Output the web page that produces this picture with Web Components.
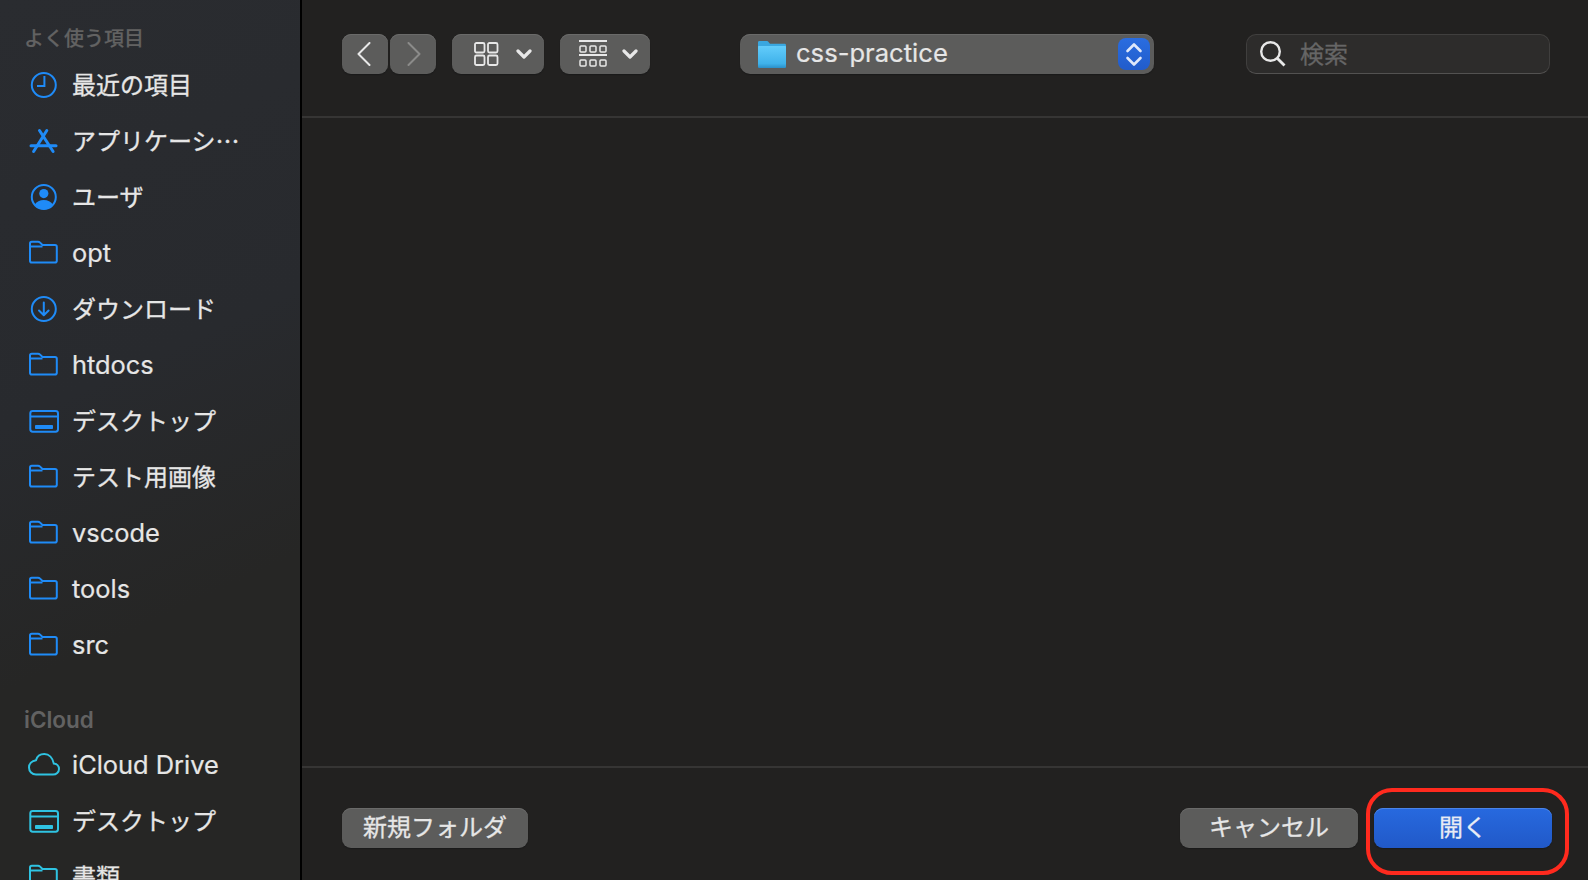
<!DOCTYPE html>
<html lang="ja">
<head>
<meta charset="utf-8">
<title>open dialog</title>
<style>
  html, body { margin: 0; height: 100%; overflow: hidden; background: #222120; }
  body { font-family: Inter, "Noto Sans CJK JP", sans-serif; color: #e6e6e6; }
</style>
</head>
<body>
<file-dialog>
  <side-header>よく使う項目</side-header>
  <side-item icon="clock" jp>最近の項目</side-item>
  <side-item icon="apps" jp>アプリケーシ…</side-item>
  <side-item icon="user" jp>ユーザ</side-item>
  <side-item icon="folder">opt</side-item>
  <side-item icon="download" jp>ダウンロード</side-item>
  <side-item icon="folder">htdocs</side-item>
  <side-item icon="desktop" jp>デスクトップ</side-item>
  <side-item icon="folder" jp>テスト用画像</side-item>
  <side-item icon="folder">vscode</side-item>
  <side-item icon="folder">tools</side-item>
  <side-item icon="folder">src</side-item>
  <side-header cloud>iCloud</side-header>
  <side-item icon="cloud" cyan>iCloud Drive</side-item>
  <side-item icon="desktop" cyan jp>デスクトップ</side-item>
  <side-item icon="folder" cyan jp>書類</side-item>

  <dialog-toolbar slot="toolbar"></dialog-toolbar>
  <dialog-footer slot="footer"></dialog-footer>
</file-dialog>

<script>
const icons = {
  clock: `<circle cx="15.800" cy="16" r="12"/><path d="M16.400 7v10H9"/>`,
  apps: `<g stroke-width="3" stroke-linecap="round"><path d="M11.500 5.500l13.600 21M18.800 5.500L5.600 26.500"/><path d="M3 20.700h25"/></g>`,
  user: `<circle cx="15.800" cy="16" r="12"/><circle cx="15.800" cy="12.600" r="4.600" fill="currentColor" stroke="none"/><path d="M6.500 24c2-3.600 5.400-5 9.300-5s7.300 1.400 9.300 5c-2.300 2.800-5.500 4.400-9.300 4.400S8.800 26.800 6.500 24z" fill="currentColor" stroke="none"/>`,
  download: `<circle cx="15.800" cy="16" r="12"/><path d="M15.800 9.500v12.500M11 17.500l4.800 4.800 4.800-4.800" stroke-linecap="round" stroke-linejoin="round"/>`,
  folder: `<path d="M3.800 4.700h6.200c1 0 1.500.3 2.100.9L14.500 8H27c1.200 0 1.800.6 1.800 1.800v14c0 1.200-.6 1.800-1.800 1.800H3.800c-1.200 0-1.800-.6-1.800-1.800V6.500c0-1.200.6-1.800 1.800-1.800z"/><path d="M2 9.500H14.500"/>`,
  desktop: `<rect x="2.300" y="6" width="27.700" height="20.700" rx="2.400"/><path d="M2.300 11.500h27.700"/><rect x="7" y="20" width="18" height="4" rx=".8" fill="currentColor" stroke="none"/>`,
  cloud: `<path d="M8 25.600h17c3.300 0 6-2.400 6-5.500 0-3-2.300-5.300-5.200-5.500C24.700 8.900 21 5 16.300 5c-4 0-7.300 2.500-8.300 6.200C3.800 11.900 1 14.900 1 18.500c0 3.900 3.100 7.100 7 7.100z"/>`
};

const defineShadow = (name, css, html, cls) => {
  const tmpl = document.createElement("template");
  tmpl.innerHTML = `<style>${css}</style>${html}`;
  customElements.define(name, class extends (cls || HTMLElement) {
    constructor() {
      super();
      this.attachShadow({ mode: "open" });
      this.shadowRoot.appendChild(tmpl.content.cloneNode(true));
    }
  });
};

defineShadow("file-dialog", `
  :host { display: grid; grid-template-columns: 300px 1fr; height: 880px; overflow: hidden; }
  aside { height: 880px; overflow: hidden; padding-top: 25px; box-sizing: border-box;
    background: linear-gradient(155deg, #2a2c30 0%, #282a2e 42%, #262625 68%, #262625 100%);
    border-right: 2px solid #000; width: 302px; }
  main { display: flex; flex-direction: column; height: 880px; margin-left: 2px; background: #222120; }
  .fill { flex: 1; }
`, `
  <aside><slot></slot></aside>
  <main>
    <slot name="toolbar"></slot>
    <div class="fill"></div>
    <slot name="footer"></slot>
  </main>
`);

defineShadow("side-header", `
  :host { display: block; height: 28px; line-height: 28px; padding-left: 24px; margin-bottom: 4px;
    font-size: 20px; color: #626262; font-weight: 500; -webkit-text-stroke: .2px #626262; }
  :host([cloud]) { margin-top: 33px; margin-bottom: 3px; font-weight: 600; font-size: 22.500px; -webkit-text-stroke: 0; }
`, `<slot></slot>`);

class SideItem extends HTMLElement {
  connectedCallback() {
    const svg = this.shadowRoot.querySelector("svg");
    svg.innerHTML = icons[this.getAttribute("icon")];
  }
}
defineShadow("side-item", `
  :host { display: flex; align-items: center; height: 56px; padding-left: 28px; gap: 12px;
    font-size: 25.400px; color: #e6e6e6; white-space: nowrap; -webkit-text-stroke: .2px #e6e6e6; }
  span { padding-bottom: 2px; }
  :host([jp]) { font-family: "Noto Sans CJK JP", sans-serif; font-size: 24px; -webkit-text-stroke: .3px #e6e6e6; }
  :host([jp]) span { padding-bottom: 4px; }
  svg { width: 32px; height: 32px; flex: none; fill: none; stroke: currentColor; stroke-width: 2; color: #1f8bf7; -webkit-text-stroke: 0; }
  :host([cyan]) svg { color: #2fc3e2; }
`, `<svg viewBox="0 0 32 32"></svg><span><slot></slot></span>`, SideItem);

defineShadow("tool-button", `
  :host { display: flex; align-items: center; justify-content: center; height: 40px; box-sizing: border-box;
    background: #5c5c5b; border-radius: 9px; color: #e8e8e8; box-shadow: inset 0 1px 0 #6a6a69, 0 1px 1px #1a1a1a; }
  ::slotted(svg) { display: block; fill: none; stroke: currentColor; }
`, `<slot></slot>`);

defineShadow("path-popup", `
  :host { display: flex; align-items: center; width: 414px; height: 40px; box-sizing: border-box;
    margin-left: 90px; padding: 0 4px 0 18px; border-radius: 10px; background: #5c5c5b;
    box-shadow: inset 0 1px 0 #6a6a69, 0 1px 1px #1a1a1a; font-size: 25.600px; color: #e6e6e6; }
  .name { margin-left: 10px; flex: 1; padding-bottom: 4px; -webkit-text-stroke: .2px #e6e6e6; }
  .stepper { width: 32px; height: 32px; border-radius: 8px; background: linear-gradient(#2a6de0, #215ccb); display: flex; }
  svg { display: block; }
`, `
  <svg width="28" height="27" viewBox="0 0 28 27">
    <defs><linearGradient id="f" x1="0" y1="0" x2="0" y2="1"><stop offset="0" stop-color="#63ccfb"/><stop offset=".8" stop-color="#3fb2ea"/><stop offset="1" stop-color="#2a8fc8"/></linearGradient></defs>
    <path d="M1.500 0h7c1 0 1.500.3 2 .9L12 2.700h14.500c1 0 1.500.5 1.500 1.500V7H0V1.500C0 .5.500 0 1.500 0z" fill="#3aa7e0"/>
    <path d="M1 5h26c.7 0 1 .4 1 1v19.500c0 1-.5 1.500-1.500 1.500h-25C.5 27 0 26.500 0 25.500V6c0-.6.300-1 1-1z" fill="url(#f)"/>
  </svg>
  <span class="name"><slot></slot></span>
  <span class="stepper">
    <svg width="32" height="32" viewBox="0 0 32 32" fill="none" stroke="#dfe8fa" stroke-width="2.600" stroke-linecap="round" stroke-linejoin="round">
      <path d="M9.500 13L16 6.500l6.500 6.500M9.500 20l6.500 6.500 6.500-6.500"/>
    </svg>
  </span>
`);

defineShadow("search-box", `
  :host { display: flex; align-items: center; width: 304px; height: 40px; box-sizing: border-box; margin-left: auto;
    padding-left: 13px; gap: 14px; border-radius: 10px; background: #2d2c2b; border: 1px solid #403f3e; border-bottom-color: #535251;
    font-size: 24px; color: #666; }
  svg { display: block; flex: none; }
  span { padding-bottom: 3px; -webkit-text-stroke: .3px #666; }
`, `
  <svg width="26" height="26" viewBox="0 0 26 26" fill="none" stroke="#e8e8e8" stroke-width="2.400"><circle cx="10.500" cy="10.500" r="9.300"/><path d="M17.500 17.500l7 7" stroke-width="2.800"/></svg>
  <span><slot></slot></span>
`);

defineShadow("dialog-toolbar", `
  :host { display: flex; align-items: flex-start; box-sizing: border-box; padding: 34px 38px 0 40px;
    border-bottom: 2px solid #363534; height: 118px; }
  .nav { display: flex; gap: 2px; margin-right: 16px; }
  .back { width: 46px; padding-right: 2px; box-sizing: border-box; }
  .fwd { width: 46px; padding-left: 2px; box-sizing: border-box; color: #8b8b8a; }
  .view { width: 92px; margin-right: 16px; gap: 17px; padding-left: 10px; box-sizing: border-box; }
  .group { width: 90px; gap: 15px; padding-left: 6px; box-sizing: border-box; }
`, `
  <div class="nav">
    <tool-button class="back"><svg width="14" height="24" viewBox="0 0 14 24" stroke-width="2" stroke-linecap="round" stroke-linejoin="round"><path d="M12.500 1L1.500 12l11 11"/></svg></tool-button>
    <tool-button class="fwd"><svg width="14" height="24" viewBox="0 0 14 24" stroke-width="2" stroke-linecap="round" stroke-linejoin="round"><path d="M1.500 1l11 11-11 11"/></svg></tool-button>
  </div>
  <tool-button class="view">
    <svg width="25" height="24" viewBox="0 0 25 24" stroke-width="1.800"><rect x="1" y="1" width="9.500" height="9.500" rx="1.500"/><rect x="14" y="1" width="9.500" height="9.500" rx="1.500"/><rect x="1" y="13.500" width="9.500" height="9.500" rx="1.500"/><rect x="14" y="13.500" width="9.500" height="9.500" rx="1.500"/></svg>
    <svg width="16" height="12" viewBox="0 0 16 12" stroke-width="3.200" stroke-linecap="round" stroke-linejoin="round"><path d="M2 3l6 6 6-6"/></svg>
  </tool-button>
  <tool-button class="group">
    <svg width="28" height="28" viewBox="0 0 28 28" stroke-width="1.500"><path d="M0 1h28M0 15h28" stroke-width="1.800"/><rect x="1" y="6" width="6" height="6" rx="1"/><rect x="11" y="6" width="6" height="6" rx="1"/><rect x="21" y="6" width="6" height="6" rx="1"/><rect x="1" y="20" width="6" height="6" rx="1"/><rect x="11" y="20" width="6" height="6" rx="1"/><rect x="21" y="20" width="6" height="6" rx="1"/></svg>
    <svg width="16" height="12" viewBox="0 0 16 12" stroke-width="3.200" stroke-linecap="round" stroke-linejoin="round"><path d="M2 3l6 6 6-6"/></svg>
  </tool-button>
  <path-popup>css-practice</path-popup>
  <search-box>検索</search-box>
`);

defineShadow("push-button", `
  :host { display: flex; align-items: center; justify-content: center; height: 40px; box-sizing: border-box;
    padding-bottom: 5px; border-radius: 9px; background: #5c5c5b; box-shadow: inset 0 1px 0 #6a6a69, 0 1px 1px #1a1a1a;
    font-size: 24px; color: #e6e6e6; -webkit-text-stroke: .3px #e6e6e6; font-family: "Noto Sans CJK JP", sans-serif; position: relative; }
  :host([primary]) { background: linear-gradient(#2769df, #2159c8); box-shadow: inset 0 1px 0 #4a84e8, 0 1px 1px #1a1a1a; color: #e8eefb; }
`, `<slot></slot>`);

defineShadow("mark-ring", `
  :host { position: absolute; left: -8px; right: -17px; top: -20px; bottom: -27px;
    border: 4px solid #ff2a1e; border-radius: 26px; pointer-events: none; }
`, ``);

defineShadow("dialog-footer", `
  :host { display: flex; align-items: flex-start; height: 114px; box-sizing: border-box;
    padding: 40px 36px 0 40px; border-top: 2px solid #363534; }
  .new { width: 186px; margin-right: auto; }
  .cancel { width: 178px; margin-right: 16px; }
  .open { width: 178px; }
`, `
  <push-button class="new">新規フォルダ</push-button>
  <push-button class="cancel">キャンセル</push-button>
  <push-button class="open" primary>開く<mark-ring></mark-ring></push-button>
`);
</script>
</body>
</html>
